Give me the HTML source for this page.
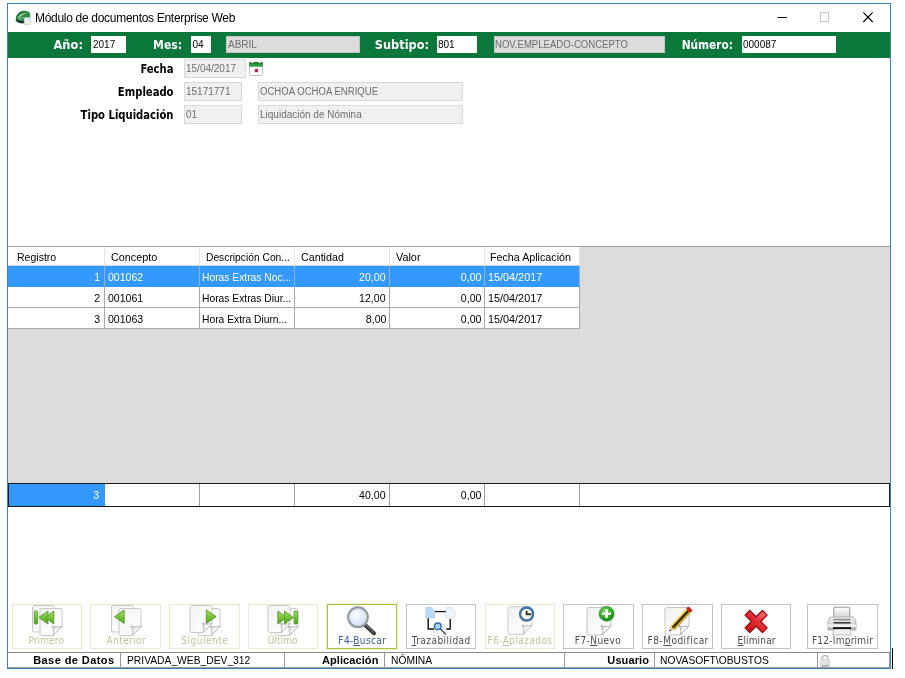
<!DOCTYPE html>
<html lang="es"><head><meta charset="utf-8"><title>Módulo de documentos Enterprise Web</title>
<style>
*{box-sizing:border-box;margin:0;padding:0}
html,body{width:905px;height:678px;overflow:hidden;background:#fff}
body{position:relative;font-family:"Liberation Sans",sans-serif;font-size:11px;color:#000}
div,span{position:absolute;white-space:nowrap}
#root{left:0;top:0;width:905px;height:678px;will-change:transform}
#win{left:7px;top:3px;width:884px;height:666px;border:1px solid #417fb8;background:#fff}
#title{left:35px;top:10px;font-size:12px;line-height:16px;color:#000;letter-spacing:-0.3px}
#band{left:8px;top:32px;width:882px;height:26px;background:#0b773b}
.bl{top:36px;height:18px;line-height:18px;color:#fff;font-weight:bold;font-size:13px;text-align:right;transform:scaleX(0.914);transform-origin:right center;font-family:"DejaVu Sans Condensed","Liberation Sans",sans-serif}
.in{height:17px;line-height:15px;font-size:10px;padding-left:1px;overflow:hidden}
.in.w{background:#fff;border:1px solid #fff;color:#000;top:36px;padding-left:0}
.in.g{background:#dcdcdc;border:1px solid #c4c4c4;color:#6d6d6d;top:36px}
.in.d{background:#f0f0f0;border:1px solid #d9d9d9;color:#6d6d6d}
.fl{left:20px;width:153.5px;height:18px;line-height:18px;text-align:right;font-weight:bold;font-size:12px;transform:scaleX(0.93);transform-origin:right center;font-family:"DejaVu Sans Condensed","Liberation Sans",sans-serif}
#grid{left:8px;top:246px;width:882px;height:237px;background:#dcdcdc;border-top:1px solid #a0a0a0}
.c{height:21px;line-height:22px;font-size:11px;padding:0 3px;overflow:hidden;background:#fff;border-right:1px solid #a8a8a8;border-bottom:1px solid #a8a8a8}
.c.h{height:19px;line-height:21px;border-right:1px solid #e5e5e5;border-bottom:1px solid #d5d5d5}
.c span,.t span{top:0;height:100%}
span.l{transform-origin:left center}
span.r{transform-origin:right center}
.c.s{background:#3399ff;color:#fff;border-bottom-color:#3399ff;border-right-color:#8fb4dc}
#tot{left:8px;top:483px;width:882px;height:24px;background:#fff;border:1px solid #1a1a1a}
.t{top:0;height:22px;line-height:22px;font-size:11px;padding:0 3px;text-align:right;border-right:1px solid #a0a0a0}
.btn{top:604px;width:70px;height:45px;border:1px solid #c3c3c3;background:#fff}
.btn.dis{border-color:#e6ead2}
.btn.foc{border-color:#a6c539;box-shadow:0 0 0 1px rgba(166,197,57,0.22)}
.btn span{left:0;width:100%;text-align:center;bottom:1px;height:13px;line-height:13px;font-size:10px;font-family:"DejaVu Sans Condensed","Liberation Sans",sans-serif;color:#4a4a4a;letter-spacing:0.2px}
.btn.dis span{color:#b9c79b}
.btn.foc span{color:#3d5d98}
.btn svg{position:absolute}
u{text-decoration:underline}
#sb{left:8px;top:652px;width:882px;height:16px;border-top:1px solid #8a8a8a;border-bottom:1px solid #9a9a9a;border-right:1px solid #9a9a9a;background:#fff}
.sc{top:0;height:14px;line-height:14px;font-size:11px;border-right:1px solid #9a9a9a}
.sc span{top:0;height:14px}
.sc.b{font-weight:bold;letter-spacing:0.1px}
</style></head><body>
<div id="root">
<div id="win"></div>
<svg style="position:absolute;left:15px;top:10px" width="16" height="16" viewBox="0 0 16 16"><path d="M0.800 8.500 C1.200 4.500 4.500 1.200 8.500 0.800 C11.500 0.500 14 1.500 15 3 L15.200 9 L9 9 L9 13 C6 13.600 2.500 12.800 0.800 11 Z" fill="#2f8a47"/><path d="M0.800 10.300 C2.800 12.800 6 13.800 9.300 13.200 L9.300 11.200 C6.300 11.600 3.200 10.800 1.400 9.200Z" fill="#10283a"/><path d="M2.500 7 C4.500 4 8.500 2.600 12.500 3.600 C9 4.200 6 5.600 4 8.300Z" fill="#a6dcae" opacity="0.850"/><path d="M3 9.200 C5 7.500 7.500 6.800 10 7 L9 8.500 C7 8.300 5 8.900 3.600 10Z" fill="#7cc487" opacity="0.800"/><path d="M1.500 6.500 C3 3.500 6 1.800 9.500 1.600 C6.500 2.600 4 4.300 2.600 7.300Z" fill="#1f6a34"/><rect x="9.300" y="7.600" width="6.200" height="7" rx="0.600" fill="#e4e9f6" stroke="#b4bedb" stroke-width="0.600"/><rect x="10" y="11" width="4.800" height="3" fill="#f0f3cf"/></svg>
<div id="title">Módulo de documentos Enterprise Web</div>
<svg style="position:absolute;left:760px;top:4px" width="130" height="28" viewBox="0 0 130 28"><path d="M17.500 13.500 H27" stroke="#000" stroke-width="1"/><rect x="60.500" y="8.500" width="8" height="9" fill="none" stroke="#c6c6c6" stroke-width="1"/><path d="M103.300 8.400 L112.700 18 M112.700 8.400 L103.300 18" stroke="#000" stroke-width="1.100"/></svg>
<div id="band"></div>
<div class="bl" style="left:-37.5px;width:120px;transform:scaleX(0.98)">Año:</div>
<div class="bl" style="left:61.5px;width:120px;transform:scaleX(0.925)">Mes:</div>
<div class="bl" style="left:309px;width:120px;transform:scaleX(0.97)">Subtipo:</div>
<div class="bl" style="left:612.5px;width:120px;transform:scaleX(0.905)">Número:</div>
<div class="in w" style="left:91px;width:35px"><span style="position:relative;display:inline-block;transform-origin:left center;left:1px">2017</span></div>
<div class="in w" style="left:191px;width:20px"><span style="position:relative;display:inline-block;transform-origin:left center;left:0.5px">04</span></div>
<div class="in g" style="left:226px;width:134px"><span style="position:relative;display:inline-block;transform-origin:left center">ABRIL</span></div>
<div class="in w" style="left:437px;width:40px"><span style="position:relative;display:inline-block;transform-origin:left center">801</span></div>
<div class="in g" style="left:494px;width:171px"><span style="position:relative;display:inline-block;transform-origin:left center;transform:scaleX(0.957);left:-1px">NOV.EMPLEADO-CONCEPTO</span></div>
<div class="in w" style="left:742px;width:94px"><span style="position:relative;display:inline-block;transform-origin:left center">000087</span></div>
<div class="fl" style="top:60px">Fecha</div>
<div class="fl" style="top:82.5px">Empleado</div>
<div class="fl" style="top:106px">Tipo Liquidación</div>
<div class="in d" style="left:184px;width:62px;padding-top:1px;height:19px;top:59px"><span style="position:relative;display:inline-block;transform-origin:left center">15/04/2017</span></div>
<div class="in d" style="left:184px;width:58px;padding-top:1px;height:19px;top:82px"><span style="position:relative;display:inline-block;transform-origin:left center">15171771</span></div>
<div class="in d" style="left:258px;width:205px;padding-top:1px;height:19px;top:82px"><span style="position:relative;display:inline-block;transform-origin:left center;transform:scaleX(0.957);left:-0.5px">OCHOA OCHOA ENRIQUE</span></div>
<div class="in d" style="left:184px;width:58px;padding-top:1px;height:19px;top:105px"><span style="position:relative;display:inline-block;transform-origin:left center">01</span></div>
<div class="in d" style="left:258px;width:205px;padding-top:1px;height:19px;top:105px"><span style="position:relative;display:inline-block;transform-origin:left center">Liquidación de Nómina</span></div>
<svg style="position:absolute;left:248px;top:60px" width="16" height="17" viewBox="0 0 16 17"><rect x="1.500" y="2.200" width="13" height="13.300" rx="1.300" fill="#fff" stroke="#b9c4b9" stroke-width="0.900"/><path d="M1.200 3.500 a1.500 1.500 0 0 1 1.500 -1.500 h10.600 a1.500 1.500 0 0 1 1.500 1.500 v3.300 h-13.600z" fill="#34a043"/><path d="M1.200 3.500 a1.500 1.500 0 0 1 1.500 -1.500 h10.600 a1.500 1.500 0 0 1 1.500 1.500 v0.800 h-13.600z" fill="#1f7a2e"/><rect x="3.200" y="1.800" width="2.200" height="1.200" fill="#e9f3e9"/><rect x="10.600" y="1.800" width="2.200" height="1.200" fill="#e9f3e9"/><rect x="6.900" y="9.100" width="3.100" height="3" rx="0.700" fill="#9a1838"/><rect x="6.300" y="8.500" width="4.300" height="4.200" rx="1" fill="#f06080" opacity="0.250"/></svg>
<div id="grid">
<div class="c h" style="left:0px;top:0;width:97px"><span class="l" style="left:9px;transform:scaleX(0.956)">Registro</span></div>
<div class="c h" style="left:97px;top:0;width:95px"><span class="l" style="left:6px;transform:scaleX(0.984)">Concepto</span></div>
<div class="c h" style="left:192px;top:0;width:95px"><span class="l" style="left:6px;transform:scaleX(0.933)">Descripción Con...</span></div>
<div class="c h" style="left:287px;top:0;width:95px"><span class="l" style="left:5.5px;transform:scaleX(0.973)">Cantidad</span></div>
<div class="c h" style="left:382px;top:0;width:95px"><span class="l" style="left:5.5px;transform:scaleX(0.985)">Valor</span></div>
<div class="c h" style="left:477px;top:0;width:95px"><span class="l" style="left:5px;transform:scaleX(0.973)">Fecha Aplicación</span></div>
<div class="c s" style="left:0px;top:19px;width:97px"><span class="r" style="right:3.5px;transform:scaleX(0.96)">1</span></div>
<div class="c s" style="left:97px;top:19px;width:95px"><span class="l" style="left:3px;transform:scaleX(0.96)">001062</span></div>
<div class="c s" style="left:192px;top:19px;width:95px"><span class="l" style="left:2px;transform:scaleX(0.935)">Horas Extras Noc...</span></div>
<div class="c s" style="left:287px;top:19px;width:95px"><span class="r" style="right:3px;transform:scaleX(0.96)">20,00</span></div>
<div class="c s" style="left:382px;top:19px;width:95px"><span class="r" style="right:3px;transform:scaleX(0.96)">0,00</span></div>
<div class="c s" style="left:477px;top:19px;width:95px"><span class="l" style="left:3px;transform:scaleX(0.985)">15/04/2017</span></div>
<div class="c" style="left:0px;top:40px;width:97px"><span class="r" style="right:3.5px;transform:scaleX(0.96)">2</span></div>
<div class="c" style="left:97px;top:40px;width:95px"><span class="l" style="left:3px;transform:scaleX(0.96)">001061</span></div>
<div class="c" style="left:192px;top:40px;width:95px"><span class="l" style="left:2px;transform:scaleX(0.935)">Horas Extras Diur...</span></div>
<div class="c" style="left:287px;top:40px;width:95px"><span class="r" style="right:3px;transform:scaleX(0.96)">12,00</span></div>
<div class="c" style="left:382px;top:40px;width:95px"><span class="r" style="right:3px;transform:scaleX(0.96)">0,00</span></div>
<div class="c" style="left:477px;top:40px;width:95px"><span class="l" style="left:3px;transform:scaleX(0.985)">15/04/2017</span></div>
<div class="c" style="left:0px;top:61px;width:97px"><span class="r" style="right:3.5px;transform:scaleX(0.96)">3</span></div>
<div class="c" style="left:97px;top:61px;width:95px"><span class="l" style="left:3px;transform:scaleX(0.96)">001063</span></div>
<div class="c" style="left:192px;top:61px;width:95px"><span class="l" style="left:2px;transform:scaleX(0.935)">Hora Extra Diurn...</span></div>
<div class="c" style="left:287px;top:61px;width:95px"><span class="r" style="right:3px;transform:scaleX(0.96)">8,00</span></div>
<div class="c" style="left:382px;top:61px;width:95px"><span class="r" style="right:3px;transform:scaleX(0.96)">0,00</span></div>
<div class="c" style="left:477px;top:61px;width:95px"><span class="l" style="left:3px;transform:scaleX(0.985)">15/04/2017</span></div>
</div>
<div id="tot">
<div class="t" style="left:0px;width:96px;background:#3399ff;color:#fff;border-color:#3399ff"><span class="r" style="right:4.5px;transform:scaleX(0.96)">3</span></div>
<div class="t" style="left:96px;width:95px"></div>
<div class="t" style="left:191px;width:95px"></div>
<div class="t" style="left:286px;width:95px"><span class="r" style="right:3px;transform:scaleX(0.96)">40,00</span></div>
<div class="t" style="left:381px;width:95px"><span class="r" style="right:3px;transform:scaleX(0.96)">0,00</span></div>
<div class="t" style="left:476px;width:95px"></div>
</div>
<svg width="0" height="0" style="position:absolute"><defs>
<linearGradient id="pg" x1="0" y1="0" x2="1" y2="1"><stop offset="0" stop-color="#f0f0f0"/><stop offset="0.6" stop-color="#fbfbfb"/><stop offset="1" stop-color="#ffffff"/></linearGradient>
<linearGradient id="gr" x1="0" y1="0" x2="0" y2="1"><stop offset="0" stop-color="#a4dc54"/><stop offset="0.5" stop-color="#6abf22"/><stop offset="1" stop-color="#3c9610"/></linearGradient>
<linearGradient id="rd" x1="0" y1="0" x2="0" y2="1"><stop offset="0" stop-color="#f0707a"/><stop offset="0.5" stop-color="#e02a32"/><stop offset="1" stop-color="#c8141c"/></linearGradient>
<radialGradient id="ln" cx="0.4" cy="0.35" r="0.7"><stop offset="0" stop-color="#ffffff"/><stop offset="1" stop-color="#c9dcf6"/></radialGradient>
<radialGradient id="gc" cx="0.4" cy="0.3" r="0.8"><stop offset="0" stop-color="#6fd05a"/><stop offset="0.6" stop-color="#2fa528"/><stop offset="1" stop-color="#158014"/></radialGradient>
<linearGradient id="pr" x1="0" y1="0" x2="0" y2="1"><stop offset="0" stop-color="#f4f4f4"/><stop offset="0.5" stop-color="#d8d8d8"/><stop offset="1" stop-color="#b4b4b4"/></linearGradient>
<linearGradient id="pp" x1="0" y1="0" x2="0" y2="1"><stop offset="0" stop-color="#ffffff"/><stop offset="1" stop-color="#c8c8c8"/></linearGradient>
<linearGradient id="curl" x1="0" y1="0" x2="1" y2="1"><stop offset="0" stop-color="#b8b8b8"/><stop offset="0.45" stop-color="#ffffff"/><stop offset="1" stop-color="#f0f0f0"/></linearGradient>
</defs></svg>
<div class="btn dis" style="left:12px;width:70px"><svg width="71" height="45" viewBox="0 0 71 45" style="left:-1px;top:-1px"><g opacity="0.9"><rect x="20.5" y="1.5" width="21.5" height="26.5" rx="1.5" fill="url(#pg)" stroke="#c4c4c4" stroke-width="1" opacity="1"/><path d="M29.5 4.5 H48.5 Q50.0 4.5 50.0 6.0 V22.5 L41.0 31.5 H29.5 Q28.0 31.5 28.0 30.0 V6.0 Q28.0 4.5 29.5 4.5Z" fill="url(#pg)" stroke="#c4c4c4" stroke-width="1" opacity="1"/><path d="M41.0 31.5 C42.5 28.5 42.0 25.5 40.0 22.0 C43.0 23.5 47.0 23.0 50.0 22.5Z" fill="url(#curl)" stroke="#a9a9a9" stroke-width="0.9" opacity="1"/><rect x="22.3" y="7.0" width="3.1" height="13.0" rx="0.8" fill="url(#gr)" stroke="#3f8f14" stroke-width="0.9"/><path d="M27.0 13.5 L36.0 7.0 V20.0Z" fill="url(#gr)" stroke="#3f8f14" stroke-width="0.9" stroke-linejoin="round"/><path d="M33.5 13.5 L41.8 7.0 V20.0Z" fill="url(#gr)" stroke="#3f8f14" stroke-width="0.9" stroke-linejoin="round"/></g></svg><span style="letter-spacing:0.13px;left:-16.8px;width:100px">Primero</span></div>
<div class="btn dis" style="left:90px;width:71px"><svg width="71" height="45" viewBox="0 0 71 45" style="left:0px;top:-1px"><g opacity="0.9"><rect x="20.5" y="1.5" width="21.5" height="26.5" rx="1.5" fill="url(#pg)" stroke="#c4c4c4" stroke-width="1" opacity="1"/><path d="M29.5 4.5 H48.5 Q50.0 4.5 50.0 6.0 V22.5 L41.0 31.5 H29.5 Q28.0 31.5 28.0 30.0 V6.0 Q28.0 4.5 29.5 4.5Z" fill="url(#pg)" stroke="#c4c4c4" stroke-width="1" opacity="1"/><path d="M41.0 31.5 C42.5 28.5 42.0 25.5 40.0 22.0 C43.0 23.5 47.0 23.0 50.0 22.5Z" fill="url(#curl)" stroke="#a9a9a9" stroke-width="0.9" opacity="1"/><path d="M23.6 12.7 L33.1 6.0 V19.4Z" fill="url(#gr)" stroke="#3f8f14" stroke-width="0.9" stroke-linejoin="round"/></g></svg><span style="letter-spacing:0.39px;left:-14.7px;width:100px">Anterior</span></div>
<div class="btn dis" style="left:169px;width:71px"><svg width="71" height="45" viewBox="0 0 71 45" style="left:0px;top:-1px"><g opacity="0.9"><path d="M29.5 4.5 H48.5 Q50.0 4.5 50.0 6.0 V22.5 L41.0 31.5 H29.5 Q28.0 31.5 28.0 30.0 V6.0 Q28.0 4.5 29.5 4.5Z" fill="url(#pg)" stroke="#c4c4c4" stroke-width="1" opacity="1"/><path d="M41.0 31.5 C42.5 28.5 42.0 25.5 40.0 22.0 C43.0 23.5 47.0 23.0 50.0 22.5Z" fill="url(#curl)" stroke="#a9a9a9" stroke-width="0.9" opacity="1"/><path d="M21.5 1.5 H40.5 Q42.0 1.5 42.0 3.0 V19.5 L33.0 28.5 H21.5 Q20.0 28.5 20.0 27.0 V3.0 Q20.0 1.5 21.5 1.5Z" fill="url(#pg)" stroke="#c4c4c4" stroke-width="1" opacity="1"/><path d="M33.0 28.5 C34.5 25.5 34.0 22.5 32.0 19.0 C35.0 20.5 39.0 20.0 42.0 19.5Z" fill="url(#curl)" stroke="#a9a9a9" stroke-width="0.9" opacity="1"/><path d="M46.2 12.7 L36.3 6.0 V19.4Z" fill="url(#gr)" stroke="#3f8f14" stroke-width="0.9" stroke-linejoin="round"/></g></svg><span style="letter-spacing:0.5px;left:-15.2px;width:100px">Siguiente</span></div>
<div class="btn dis" style="left:248px;width:70px"><svg width="71" height="45" viewBox="0 0 71 45" style="left:-1px;top:-1px"><g opacity="0.9"><path d="M29.5 4.5 H48.5 Q50.0 4.5 50.0 6.0 V22.5 L41.0 31.5 H29.5 Q28.0 31.5 28.0 30.0 V6.0 Q28.0 4.5 29.5 4.5Z" fill="url(#pg)" stroke="#c4c4c4" stroke-width="1" opacity="1"/><path d="M41.0 31.5 C42.5 28.5 42.0 25.5 40.0 22.0 C43.0 23.5 47.0 23.0 50.0 22.5Z" fill="url(#curl)" stroke="#a9a9a9" stroke-width="0.9" opacity="1"/><path d="M21.5 1.5 H40.5 Q42.0 1.5 42.0 3.0 V19.5 L33.0 28.5 H21.5 Q20.0 28.5 20.0 27.0 V3.0 Q20.0 1.5 21.5 1.5Z" fill="url(#pg)" stroke="#c4c4c4" stroke-width="1" opacity="1"/><path d="M33.0 28.5 C34.5 25.5 34.0 22.5 32.0 19.0 C35.0 20.5 39.0 20.0 42.0 19.5Z" fill="url(#curl)" stroke="#a9a9a9" stroke-width="0.9" opacity="1"/><path d="M38.5 13.5 L29.9 7.0 V20.0Z" fill="url(#gr)" stroke="#3f8f14" stroke-width="0.9" stroke-linejoin="round"/><path d="M45.3 13.5 L36.5 7.0 V20.0Z" fill="url(#gr)" stroke="#3f8f14" stroke-width="0.9" stroke-linejoin="round"/><rect x="46.1" y="7.0" width="3.5" height="13.0" rx="0.8" fill="url(#gr)" stroke="#3f8f14" stroke-width="0.9"/></g></svg><span style="letter-spacing:0.12px;left:-16.3px;width:100px">Último</span></div>
<div class="btn foc" style="left:327px;width:70px"><svg width="71" height="45" viewBox="0 0 71 45" style="left:-1px;top:-1px"><g><path d="M38.3 21.3 L47 29.3" stroke="#3a3a3a" stroke-width="4" stroke-linecap="round"/><path d="M38.8 20.8 L46.6 28" stroke="#8a8a8a" stroke-width="1" stroke-linecap="round"/><circle cx="31" cy="13.2" r="9.8" fill="url(#ln)" stroke="#8f979f" stroke-width="2.2"/><circle cx="31" cy="13.2" r="8.6" fill="none" stroke="#c3ccd6" stroke-width="0.8"/></g></svg><span style="letter-spacing:0.38px;left:-15.7px;width:100px">F4-<u>B</u>uscar</span></div>
<div class="btn " style="left:406px;width:70px"><svg width="71" height="45" viewBox="0 0 71 45" style="left:-1px;top:-1px"><g><rect x="27.5" y="20" width="11" height="11.5" fill="#f7f7f7" stroke="#e3e3e3" stroke-width="0.8"/><path d="M28.8 7.6 H40.2 M22.2 14 V25 H28 M44.2 15 V25 H40.2" fill="none" stroke="#111" stroke-width="1.4"/><path d="M19.8 3.500 H26 L28.800 6.300 V14 H19.800Z" fill="#b9daf7" stroke="#a6c8e8" stroke-width="0.6"/><path d="M26 3.500 V6.300 H28.800" fill="#e4f1fc" stroke="#a6c8e8" stroke-width="0.5"/><path d="M40.2 3.500 H46 L48.800 6.300 V14 H40.200Z" fill="#ecf6fb" stroke="#c9d4da" stroke-width="0.6"/><path d="M46 3.500 V6.300 H48.800" fill="#fff" stroke="#c9d4da" stroke-width="0.5"/><path d="M34.3 24.800 L39.500 30.200" stroke="#4a4a4a" stroke-width="1.3" stroke-linecap="round"/><circle cx="31.800" cy="22.300" r="3.300" fill="#a8d4f5" stroke="#2f6aa3" stroke-width="1.300"/></g></svg><span style="letter-spacing:0.45px;left:-15.8px;width:100px"><u>T</u>razabilidad</span></div>
<div class="btn dis" style="left:485px;width:70px"><svg width="71" height="45" viewBox="0 0 71 45" style="left:-1px;top:-1px"><g opacity="0.85"><path d="M24.5 2.8 H45.5 Q47.0 2.8 47.0 4.3 V21.3 L38.0 30.3 H24.5 Q23.0 30.3 23.0 28.8 V4.3 Q23.0 2.8 24.5 2.8Z" fill="url(#pg)" stroke="#c4c4c4" stroke-width="1" opacity="1"/><path d="M38.0 30.3 C39.5 27.3 39.0 24.3 37.0 20.8 C40.0 22.3 44.0 21.8 47.0 21.3Z" fill="url(#curl)" stroke="#a9a9a9" stroke-width="0.9" opacity="1"/><circle cx="41.6" cy="10" r="6.5" fill="#fff" stroke="#1e5a8c" stroke-width="2.4"/><path d="M41.600 6.800 V10.300 H46.200" fill="none" stroke="#111" stroke-width="1.9"/></g></svg><span style="letter-spacing:0.41px;left:-16.0px;width:100px">F6-<u>A</u>plazados</span></div>
<div class="btn " style="left:563px;width:71px"><svg width="71" height="45" viewBox="0 0 71 45" style="left:0px;top:-1px"><g><path d="M24.5 3.5 H45.5 Q47.0 3.5 47.0 5.0 V22.0 L38.0 31.0 H24.5 Q23.0 31.0 23.0 29.5 V5.0 Q23.0 3.5 24.5 3.5Z" fill="url(#pg)" stroke="#c4c4c4" stroke-width="1" opacity="1"/><path d="M38.0 31.0 C39.5 28.0 39.0 25.0 37.0 21.5 C40.0 23.0 44.0 22.5 47.0 22.0Z" fill="url(#curl)" stroke="#a9a9a9" stroke-width="0.9" opacity="1"/><circle cx="42.6" cy="9.7" r="7.5" fill="url(#gc)" stroke="#1d8a1d" stroke-width="0.6"/><path d="M42.600 5.300 V14.100 M38.200 9.700 H47" stroke="#fff" stroke-width="2.600"/></g></svg><span style="letter-spacing:0.43px;left:-16.0px;width:100px">F7-<u>N</u>uevo</span></div>
<div class="btn " style="left:642px;width:71px"><svg width="71" height="45" viewBox="0 0 71 45" style="left:-1px;top:-1px"><g><path d="M24.5 3.5 H45.5 Q47.0 3.5 47.0 5.0 V22.0 L38.0 31.0 H24.5 Q23.0 31.0 23.0 29.5 V5.0 Q23.0 3.5 24.5 3.5Z" fill="url(#pg)" stroke="#c4c4c4" stroke-width="1" opacity="1"/><path d="M38.0 31.0 C39.5 28.0 39.0 25.0 37.0 21.5 C40.0 23.0 44.0 22.5 47.0 22.0Z" fill="url(#curl)" stroke="#a9a9a9" stroke-width="0.9" opacity="1"/><g transform="translate(27.3 27.4) rotate(-47.300)"><path d="M0 0 L5 -3 V3Z" fill="#e9cfa0"/><path d="M0 0 L2 -1 V1Z" fill="#222"/><rect x="5" y="-3" width="23" height="6" fill="#ecc233"/><rect x="5" y="-1.200" width="23" height="2.400" fill="#35260e"/><rect x="5" y="-3" width="23" height="1" fill="#f7e08a"/><rect x="5" y="2.200" width="23" height="0.800" fill="#b88a1c"/><rect x="28" y="-3" width="3.300" height="6" rx="1" fill="#c9201a"/></g></g></svg><span style="letter-spacing:0.48px;left:-14.8px;width:100px">F8-<u>M</u>odificar</span></div>
<div class="btn " style="left:721px;width:70px"><svg width="71" height="45" viewBox="0 0 71 45" style="left:-1px;top:-1px"><g><g transform="translate(35.100 17.500) rotate(45)"><path d="M-3.300 -12.300 H3.300 V-3.300 H12.300 V3.300 H3.300 V12.300 H-3.300 V3.300 H-12.300 V-3.300 H-3.300Z" fill="url(#rd)" stroke="#9c0a10" stroke-width="1.300" stroke-linejoin="round"/></g></g></svg><span style="letter-spacing:0.16px;left:-15.4px;width:100px"><u>E</u>liminar</span></div>
<div class="btn " style="left:807px;width:71px"><svg width="71" height="45" viewBox="0 0 71 45" style="left:-1px;top:-1px"><g><rect x="26.800" y="3.200" width="16" height="13" rx="1" fill="url(#pp)" stroke="#7d7d7d" stroke-width="0.8"/><path d="M23.500 13 H46.500 L49 17.500 V26 H21 V17.500Z" fill="url(#pr)" stroke="#9a9a9a" stroke-width="0.7"/><rect x="26.500" y="14.800" width="17" height="1.600" fill="#8c8c8c"/><rect x="26.500" y="18" width="17" height="1.600" fill="#3c3c3c"/><rect x="21" y="20.500" width="28" height="2.300" fill="#f6f6f6"/><path d="M27 24.500 H43 L44.300 31 H25.700Z" fill="#f1f1f1" stroke="#a8a8a8" stroke-width="0.7"/><rect x="26" y="23.200" width="18" height="1.900" fill="#111"/></g></svg><span style="letter-spacing:0.25px;left:-15.5px;width:100px">F12-Im<u>p</u>rimir</span></div>
<div id="sb">
<div class="sc b" style="left:0px;width:113px"><span style="right:5.5px"><span style="position:static;letter-spacing:0.42px">Base de Datos</span></span></div>
<div class="sc" style="left:113px;width:164px"><span class="l" style="left:6px;transform:scaleX(0.935)">PRIVADA_WEB_DEV_312</span></div>
<div class="sc b" style="left:277px;width:100px"><span style="right:5.5px">Aplicación</span></div>
<div class="sc" style="left:377px;width:180px"><span class="l" style="left:6px;transform:scaleX(0.935)">NÓMINA</span></div>
<div class="sc b" style="left:557px;width:90px"><span style="right:5px">Usuario</span></div>
<div class="sc" style="left:647px;width:163px"><span class="l" style="left:5px;transform:scaleX(0.935)">NOVASOFT\OBUSTOS</span></div>
</div>
<svg style="position:absolute;left:819px;top:654px" width="12" height="13" viewBox="0 0 12 13"><path d="M3 6 V4.500 a3 3 0 0 1 6 0 V6" fill="none" stroke="#b9b9b9" stroke-width="1.300"/><rect x="1.500" y="5.500" width="9" height="6.500" rx="1" fill="#dfe3ea" stroke="#c2c6cc" stroke-width="0.700"/><rect x="2" y="11.500" width="8" height="1" fill="#9a9a9a"/></svg>
<div style="left:892px;top:648px;width:1px;height:21px;background:#000"></div>
</div>
</body></html>
